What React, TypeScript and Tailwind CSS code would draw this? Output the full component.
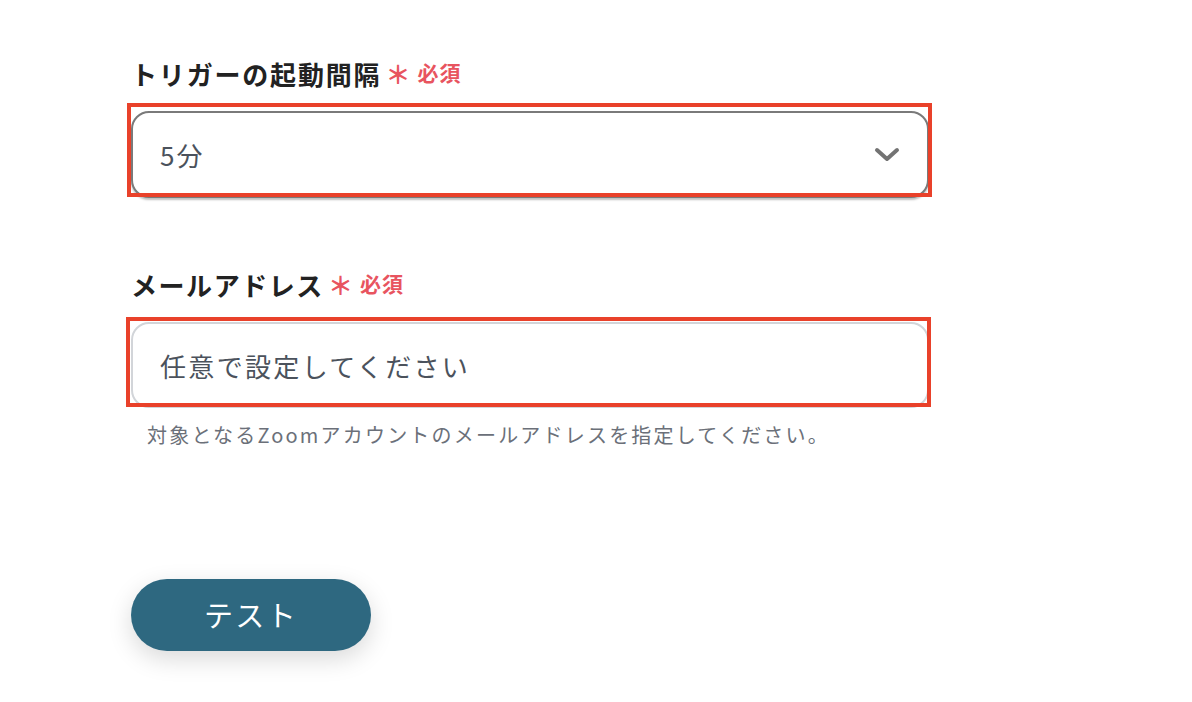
import React from 'react';

const font = '"Noto Sans CJK JP", "Noto Sans", sans-serif';

const Required: React.FC = () => (
  <span className="ml-[4px] flex items-center text-[21px] font-bold text-[#e8545f] tracking-[0.05em]">
    <span className="mr-[6px] text-[25px] leading-none">＊</span>
    必須
  </span>
);

const App: React.FC = () => {
  return (
    <div className="min-h-[702px] w-full bg-white" style={{ fontFamily: font }}>
      <div className="w-[929px] pl-[131px] pt-[55px] flex flex-col">
        {/* トリガーの起動間隔 */}
        <div className="flex items-center h-[36px]">
          <span className="text-[26px] font-bold text-[#222] tracking-[0.07em]">トリガーの起動間隔</span>
          <Required />
        </div>
        <div className="relative mt-[20px]">
          <div className="flex items-center justify-between h-[87px] rounded-[18px] border-2 border-[#7a7a7a] bg-white pl-[27px] pr-[27px] shadow-[0_2px_2px_rgba(0,0,0,0.25)]">
            <span className="text-[26px] text-[#4b525c] tracking-[0.08em]">5分</span>
            <svg width="26" height="16" viewBox="0 0 26 16" fill="none">
              <path d="M3 3 L13 12 L23 3" stroke="#737373" strokeWidth="4" strokeLinecap="round" strokeLinejoin="round" />
            </svg>
          </div>
          <div className="absolute -left-[4px] -top-[8px] -right-[3px] bottom-[1px] border-4 border-[#e9412a] pointer-events-none" />
        </div>

        {/* メールアドレス */}
        <div className="flex items-center h-[36px] mt-[68px]">
          <span className="text-[26px] font-bold text-[#222] tracking-[0.06em]">メールアドレス</span>
          <Required />
        </div>
        <div className="relative mt-[20px]">
          <div className="flex items-center h-[86px] rounded-[18px] border-2 border-[#d2d5d9] bg-white pl-[27px]">
            <span className="text-[26px] text-[#4b525c] tracking-[0.09em]">任意で設定してください</span>
          </div>
          <div className="absolute -left-[5px] -top-[5px] -right-[2px] bottom-[1px] border-4 border-[#e9412a] pointer-events-none" />
        </div>
        <p className="mt-[13px] ml-[16px] h-[28px] leading-[28px] text-[20px] text-[#6b7079] tracking-[0.11em] whitespace-nowrap">
          対象となるZoomアカウントのメールアドレスを指定してください。
        </p>

        {/* テスト */}
        <button
          type="button"
          className="mt-[130px] w-[240px] h-[72px] rounded-full bg-[#2e6880] text-white text-[29px] tracking-[0.08em] shadow-[0_8px_24px_rgba(0,0,0,0.15)]"
        >
          テスト
        </button>
      </div>
    </div>
  );
};

export default App;
